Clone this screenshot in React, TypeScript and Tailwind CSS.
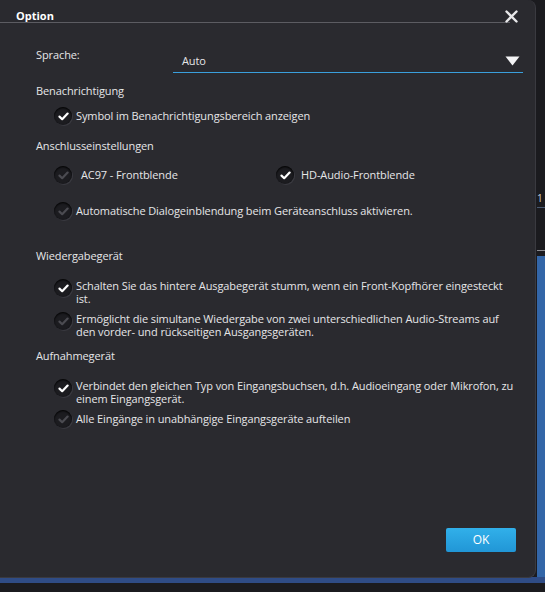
import React from 'react';

const font = { fontFamily: '"Open Sans", "Noto Sans", "Liberation Sans", sans-serif' };

function Check({ on }: { on: boolean }) {
  return (
    <span className="flex h-[18px] w-[18px] shrink-0 items-center justify-center rounded-full bg-[#1c1c20] shadow-[1px_1px_0_#3a3a40,inset_0_1px_2px_#000]">
      <svg width="11" height="9" viewBox="0 0 11 9">
        <path
          d="M1.5 4.6 L4.2 7.2 L9.6 1.6"
          fill="none"
          stroke={on ? '#ffffff' : '#4b4b51'}
          strokeWidth="2.2"
          strokeLinecap="round"
          strokeLinejoin="round"
        />
      </svg>
    </span>
  );
}

function Option({ on, children, className = '' }: { on: boolean; children: React.ReactNode; className?: string }) {
  return (
    <div className={`flex items-center gap-[4px] pl-[18px] leading-[16px] ${className}`}>
      <Check on={on} />
      <span>{children}</span>
    </div>
  );
}

// two-line option; the text lines are passed separately so they break where the dialog breaks them
function Multi({ on, lines, className = '' }: { on: boolean; lines: string[]; className?: string }) {
  return (
    <div className={`flex items-start gap-[4px] pl-[18px] ${className}`}>
      <Check on={on} />
      <div className="flex flex-col whitespace-nowrap">
        {lines.map((l) => (
          <span key={l} className="block h-[13px] leading-[13px]">
            {l}
          </span>
        ))}
      </div>
    </div>
  );
}

export default function App() {
  return (
    <div
      className="relative h-[592px] w-[545px] overflow-hidden bg-[#1b1b1f] text-[11px] tracking-[-0.1px] text-[#e6e6e8]"
      style={font}
    >
      {/* window behind the dialog */}
      <div className="absolute left-[537px] top-[193px] text-[10px] leading-[10px] text-[#d0d0d4]">1</div>
      <div className="absolute left-[537px] top-[207px] h-px w-[8px] bg-[#4a5a72]" />
      <div className="absolute left-[537px] top-[250px] h-px w-[8px] bg-[#8a8a90]" />
      <div className="absolute left-[537px] top-[256px] h-[325px] w-[8px] bg-[#3366a8]" />
      <div className="absolute left-0 top-[577px] h-[6px] w-[545px] bg-[#2f4c86]" />

      {/* Option dialog */}
      <div className="absolute left-0 top-0 flex h-[578px] w-[536px] flex-col rounded-r-[8px] border-r border-b border-[#3a3a40] bg-[#2a2a2f]">
        <div className="relative h-[23px]">
          <div className="pl-[16px] pt-[8px] text-[11px] font-bold leading-[16px] tracking-normal text-white">Option</div>
          <div className="absolute left-0 top-[22px] h-px w-[510px] bg-[#5c5c62]" />
          <svg className="absolute left-[505px] top-[10px]" width="13" height="13" viewBox="0 0 13 13">
            <path d="M1.5 1.5 L11.5 11.5 M11.5 1.5 L1.5 11.5" stroke="#e8e8ea" strokeWidth="2.4" strokeLinecap="round" />
          </svg>
        </div>

        <div className="flex flex-col pl-[36px] pr-[12px]">
          <div className="mt-[24px] flex items-start">
            <div className="w-[137px] shrink-0 leading-[16px]">Sprache:</div>
            <div className="mt-[3px] flex h-[23px] w-[350px] shrink-0 items-center justify-between border-b border-[#3a9fdc] pl-[9px] pr-[3px]">
              <span className="leading-[16px]">Auto</span>
              <svg width="15" height="10" viewBox="0 0 15 10">
                <path d="M0.5 0.5 H14.5 L7.5 9.5 Z" fill="#f4f4f6" />
              </svg>
            </div>
          </div>

          <div className="mt-[10px] leading-[16px]">Benachrichtigung</div>
          <Option on className="mt-[8px]">Symbol im Benachrichtigungsbereich anzeigen</Option>

          <div className="mt-[13px] leading-[16px]">Anschlusseinstellungen</div>
          <div className="mt-[12px] flex items-center leading-[16px]">
            <div className="flex w-[240px] items-center gap-[9px] pl-[18px]">
              <Check on={false} />
              <span>AC97 - Frontblende</span>
            </div>
            <div className="flex items-center gap-[7px]">
              <Check on />
              <span>HD-Audio-Frontblende</span>
            </div>
          </div>
          <Option on={false} className="mt-[18px]">Automatische Dialogeinblendung beim Geräteanschluss aktivieren.</Option>

          <div className="mt-[28px] leading-[16px]">Wiedergabegerät</div>
          <Multi
            on
            className="mt-[15px]"
            lines={['Schalten Sie das hintere Ausgabegerät stumm, wenn ein Front-Kopfhörer eingesteckt', 'ist.']}
          />
          <Multi
            on={false}
            className="mt-[7px]"
            lines={[
              'Ermöglicht die simultane Wiedergabe von zwei unterschiedlichen Audio-Streams auf',
              'den vorder- und rückseitigen Ausgangsgeräten.',
            ]}
          />

          <div className="mt-[10px] leading-[16px]">Aufnahmegerät</div>
          <Multi
            on
            className="mt-[15px]"
            lines={['Verbindet den gleichen Typ von Eingangsbuchsen, d.h. Audioeingang oder Mikrofon, zu', 'einem Eingangsgerät.']}
          />
          <Option on={false} className="mt-[5px]">Alle Eingänge in unabhängige Eingangsgeräte aufteilen</Option>
        </div>

        <div className="flex-1" />
        <div className="flex justify-end pb-[25px] pr-[19px]">
          <button className="h-[24px] w-[70px] rounded-[2px] bg-gradient-to-b from-[#31b0ea] to-[#2196d6] text-[12px] leading-[24px] tracking-normal text-white">
            OK
          </button>
        </div>
      </div>
    </div>
  );
}
